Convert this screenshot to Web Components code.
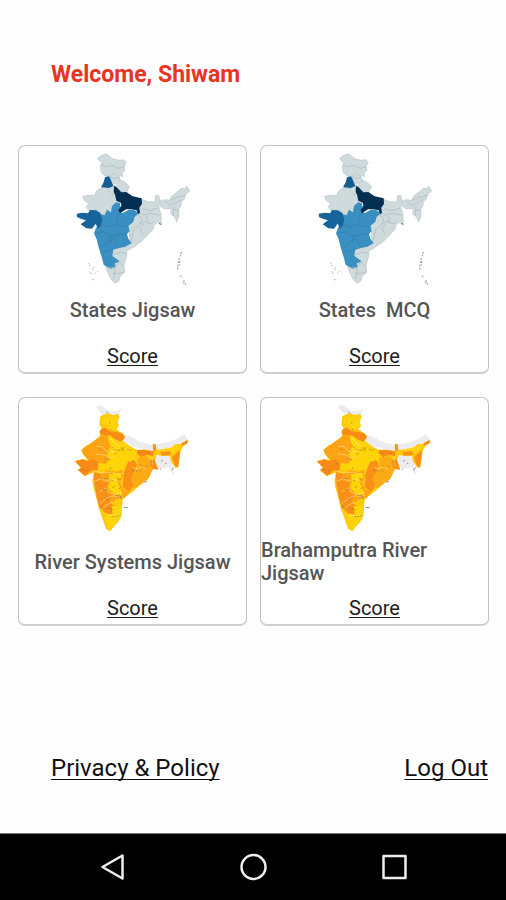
<!DOCTYPE html>
<html lang="en">
<head>
<meta charset="utf-8">
<meta name="viewport" content="width=device-width, initial-scale=1">
<title>India Map Games</title>
<style>
body { margin: 0; background: #fefefe; font-family: Roboto, "Liberation Sans", sans-serif; }
</style>
</head>
<body>
<game-home></game-home>

<template id="home-t">
<style>
:host { display: flex; flex-direction: column; min-height: 100vh; color: #111; }
header { padding: 60px 51px 0; }
h1 { margin: 0; font-size: 23px; line-height: 30px; font-weight: 700; color: #e93323; }
main { display: grid; grid-template-columns: 1fr 1fr; gap: 23px 13px; padding: 55px 17px 0 18px; }
footer { display: flex; justify-content: space-between; padding: 0 18px 49px 51px; margin-top: auto; }
footer a { color: #111; font-size: 24px; line-height: 32px; text-decoration-thickness: 1px; text-underline-offset: 3px; text-decoration-skip-ink: none; }
</style>
<header><h1>Welcome, Shiwam</h1></header>
<main>
<game-card><states-map></states-map><span slot="title">States Jigsaw</span></game-card>
<game-card><states-map></states-map><span slot="title">States&nbsp; MCQ</span></game-card>
<game-card><river-map></river-map><span slot="title">River Systems Jigsaw</span></game-card>
<game-card><river-map></river-map><span slot="title">Brahamputra River Jigsaw</span></game-card>
</main>
<footer><a href="#privacy">Privacy &amp; Policy</a><a href="#logout">Log Out</a></footer>
<system-nav></system-nav>
</template>

<template id="card-t">
<style>
:host { display: flex; flex-direction: column; align-items: center; box-sizing: border-box; height: 229px; border: 1px solid #c2c2c2; border-bottom-width: 2px; border-bottom-color: #cfcfcf; border-radius: 7px; background: #fff; min-width: 0; }
.pic { height: 140px; }
h2 { margin: 0; height: 48px; display: flex; align-items: center; font-size: 20px; line-height: 23px; font-weight: 500; color: #555; }
a { margin-top: 9px; color: #1c1c1c; font-size: 20px; line-height: 26px; text-decoration-thickness: 1px; text-underline-offset: 2px; }
</style>
<div class="pic"><slot></slot></div>
<h2><slot name="title"></slot></h2>
<a href="#score">Score</a>
</template>

<template id="states-t">
<style>:host { display: block; width: 125px; } svg { display: block; width: 100%; }</style>
<svg viewBox="0 0 375 435" aria-hidden="true" stroke-linejoin="round">
<g fill="#cfdadc" stroke="#bac6c9" stroke-width="2">
<path d="M82 38 94 28 110 24 120 32 132 40 150 43 161 41 169 50 162 61 165 73 156 80 158 92 148 88 138 92 130 82 118 92 105 90 94 80 91 62 96 52Z"/>
<path d="M118 92 130 82 146 90 151 102 143 110 133 115 125 108Z"/>
<path d="M151 102 164 108 179 122 169 139 154 138 137 120Z"/>
<path d="M108 126 126 114 136 121 136 145 126 147 117 136Z"/>
<path d="M38 151 59 148 73 149 81 133 96 125 112 129 119 144 131 148 139 155 142 171 128 179 125 194 112 190 104 207 91 201 79 192 57 194 49 184 55 172 43 163Z"/>
<path d="M214 160 234 167 255 168 256 149 266 148 270 164 266 180 273 207 274 234 263 229 251 238 250 249 229 271 215 286 200 296 183 308 170 314 170 330 162 358 164 379 151 390 147 404 135 412 124 401 113 379 105 355 130 364 145 347 127 329 133 311 180 291 178 262 175 240 190 225 208 198Z"/>
<path d="M270 165 286 161 300 163 304 152 318 140 337 126 344 129 350 121 359 135 345 146 344 158 334 168 333 180 326 190 327 211 320 228 314 213 302 204 304 188 282 188 270 180Z"/>
</g>
<path fill="#398fc1" d="M92 204 104 208 111 191 123 198 126 180 138 169 150 171 152 187 146 196 158 201 177 191 191 191 207 201 194 214 190 227 175 239 179 256 171 264 175 278 185 291 166 302 147 306 130 311 127 330 149 346 134 353 138 363 121 368 101 356 95 333 85 301 80 280 72 262 78 245 91 233Z"/>
<path fill="#17649b" d="M20 203 37 200 54 202 60 192 78 193 91 201 97 219 92 240 84 248 77 233 66 248 49 247 32 235 48 223 34 219 21 213Z"/>
<path fill="#155e94" d="M93 124 101 109 105 94 117 91 124 105 130 120 117 126Z"/>
<path fill="#052f50" d="M132 119 140 124 154 139 169 138 188 151 215 157 216 173 208 185 210 201 205 205 200 193 184 190 168 190 150 202 145 193 154 180 153 171 139 164 135 146 131 138Z"/>
<g fill="none" stroke="#37759b" stroke-width="1.5"><path d="M92 235 110 242 139 237 169 242 188 227M76 262 103 257 121 272 140 267 171 264M101 300 113 289 131 278 147 304M92 321 119 312 130 311M121 272 121 290M146 201 139 215 145 237"/></g>
<g fill="none" stroke="#a9b7bc" stroke-width="2">
<path d="M91 55 108 62 125 58 144 67 163 62M115 90 133 98 150 93M216 188 240 194 263 186M207 202 224 207 241 202 270 207M202 203 216 222 205 239 191 250 184 284M211 233 223 226 241 233 251 229M218 265 210 245 222 232M131 326 151 318 169 322M114 365 135 363 147 347 161 362M129 381 142 383 164 377M133 364 135 380 130 400M286 165 299 178 317 171 335 160M301 162 322 154 349 148M312 180 310 210M310 190 326 194M229 210 232 230"/>
</g>
<path d="M267 232 274 236" stroke="#5a6970" stroke-width="3"/>
<g stroke="#929b9e" stroke-width="3" fill="none"><path d="M334 318 331 331M328 336 325 350M324 356 323 374M329 345 328 357M330 388 336 397M341 402 347 417M338 408 343 413" stroke-dasharray="6 3"/><path d="M56 352 61 361M71 364 67 373M59 377 64 385M76 382 83 376M68 399 69 406" stroke-dasharray="3 3"/></g>
</svg>
</template>

<template id="river-t">
<style>:host { display: block; width: 125px; padding-top: 2px; } svg { display: block; width: 100%; }</style>
<svg viewBox="0 0 375 405" aria-hidden="true" stroke-linejoin="round">
<g fill="#ececee">
<path d="M77 19 91 15 105 25 119 33 139 34 159 24 145 47 117 38 96 43Z"/>
<path d="M160 103 184 111 205 123 246 135 266 131 291 127 317 118 343 102 354 119 325 132 303 151 257 157 211 145 183 139 154 123Z"/>
<path d="M256 165 283 160 304 169 309 187 304 201 314 219 309 223 297 201 281 207 261 200Z"/>
</g>
<path fill="#ffca0d" d="M91 48 103 43 115 39 128 45 144 42 149 51 143 65 147 77 139 88 155 98 165 109 158 122 178 137 199 149 222 149 249 154 248 133 256 132 259 149 284 151 303 144 317 132 334 132 354 119 356 126 341 138 333 151 330 163 326 180 325 201 316 204 303 184 299 167 276 168 260 164 256 180 263 208 249 206 242 216 235 236 216 249 201 264 178 283 159 295 156 320 155 347 145 365 131 380 121 394 108 386 96 352 86 324 79 294 70 262 67 241 73 217 60 222 44 228 24 210 32 203 14 184 38 177 53 181 39 163 34 149 48 137 70 125 88 110 96 86 88 74Z"/>
<path fill="#fda314" d="M92 108 112 106 127 121 121 142 109 160 121 181 105 198 94 189 70 191 53 177 39 162 35 149 55 135Z"/>
<path fill="#f98a16" d="M93 87 105 83 119 94 139 95 159 101 165 113 153 125 136 118 120 106 93 106 88 96ZM15 184 37 178 51 183 68 177 85 187 82 212 67 211 45 228 24 210 34 203ZM202 150 224 149 251 154 249 169 233 164 213 171 201 160Z"/>
<path fill="#fda314" d="M71 214 92 221 116 211 139 216 155 210 160 228 150 246 160 267 178 275 164 295 143 296 126 309 103 312 85 291 73 259Z"/>
<path fill="#fb9018" d="M71 221 94 219 92 239 110 255 111 280 129 284 118 304 138 323 127 345 106 339 89 323 80 291ZM162 218 174 185 194 183 201 194 195 214 184 235 191 258 177 276 158 261ZM237 182 253 176 265 209 248 207 231 194ZM271 156 300 154 307 165 276 167ZM306 171 330 151 328 179 324 203 313 194ZM249 133 257 133 259 151 250 153ZM333 130 354 119 350 132 336 137Z"/>
<path fill="#fdab14" d="M202 174 231 168 241 181 239 194 249 207 235 236 211 254 194 265 183 240 193 220 203 204Z"/>
<path fill="#ffd408" d="M112 109 135 119 156 126 185 146 199 160 195 179 175 184 162 203 148 212 121 208 99 208 86 211 88 190 109 191 119 173 109 161 121 140ZM258 151 294 145 331 133 322 149 301 166 304 151ZM125 319 156 316 151 350 121 391 106 366 110 342 128 343ZM94 56 126 51 145 44 143 67 143 83 125 91 119 77 102 74ZM116 222 150 218 156 232 140 240 150 262 158 290 130 280 114 262 120 244Z"/>
<g fill="none" stroke="#fff3ae" stroke-width="1.5"><path d="M77 139 96 139 109 154 129 156 142 144M77 162 104 165 119 174 133 169M73 213 93 219 125 216 146 224 158 220M74 244 91 237 112 242 132 237 151 246M88 275 109 264 120 278 140 284 159 275M90 310 115 292 132 287 149 294M128 306 109 315 94 330M113 343 131 349 151 341M187 202 203 207 213 200 226 207M246 170 248 195M119 111 133 131 151 139"/></g>
<g fill="none" stroke="#987b3c" stroke-width="2.5"><path d="M119 135 133 149 151 151 166 141M154 142 162 156M172 148 187 151M188 180 195 188M210 211 216 219M244 181 250 190M85 145 94 151M109 160 119 153M116 180 122 176M71 190 78 194M32 208 54 213M134 163 142 159M119 206 126 203M93 237 112 235M123 240 131 243M142 236 151 239M99 269 114 267M137 287 150 284 154 294 140 294M91 319 99 325M113 324 132 329M128 350 143 349 151 342M117 69 122 66M119 90 127 87M104 177 112 174M204 157 213 160M234 160 242 158M211 196 218 203M106 250 114 252M128 262 136 258M146 266 154 262M108 300 118 296M186 210 194 216M198 214 206 210M228 196 234 204" stroke-dasharray="5 3"/></g>
<g stroke="#858b90" stroke-width="3"><path d="M109 36 114 40M223 247 231 244M161 322 173 323M273 183 278 182M285 190 289 190M310 202 306 211M345 128 351 125M270 208 273 206"/></g>
</svg>
</template>

<template id="nav-t">
<style>
:host { display: block; background: #000; border-top: 1px solid #777; }
nav { display: grid; grid-template-columns: repeat(3, 1fr); height: 66px; padding: 0 42px; }
button { display: grid; place-items: center; border: 0; padding: 0; background: none; }
svg { width: 30px; height: 30px; fill: none; stroke: #eee; stroke-width: 2.5; stroke-linejoin: round; }
</style>
<nav aria-label="System">
<button aria-label="Back"><svg viewBox="0 0 30 30"><path d="M5.500 15 25.500 3.500V26.500Z"/></svg></button>
<button aria-label="Home"><svg viewBox="0 0 30 30"><circle cx="15.500" cy="15" r="12"/></svg></button>
<button aria-label="Recent apps"><svg viewBox="0 0 30 30"><path d="M4.500 4H26.500V26H4.500Z"/></svg></button>
</nav>
</template>

<script>
class TemplateElement extends HTMLElement {
  constructor() {
    super();
    const template = document.getElementById(this.constructor.template);
    this.attachShadow({ mode: "open" }).append(template.content.cloneNode(true));
  }
}
customElements.define("states-map", class extends TemplateElement { static template = "states-t"; });
customElements.define("river-map", class extends TemplateElement { static template = "river-t"; });
customElements.define("game-card", class extends TemplateElement { static template = "card-t"; });
customElements.define("system-nav", class extends TemplateElement { static template = "nav-t"; });
customElements.define("game-home", class extends TemplateElement { static template = "home-t"; });
</script>
</body>
</html>
